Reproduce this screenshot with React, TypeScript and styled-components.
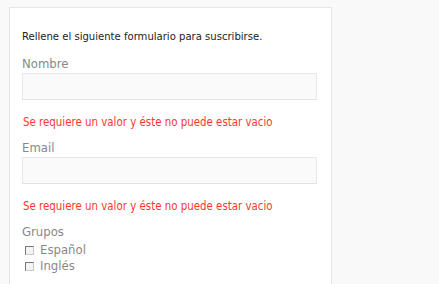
import React from 'react';
import styled, { createGlobalStyle } from 'styled-components';

const GlobalStyle = createGlobalStyle`
  html, body {
    margin: 0;
    padding: 0;
    background: #f9f9f9;
  }
  body {
    font-family: 'DejaVu Sans Condensed', 'DejaVu Sans', sans-serif;
    font-stretch: condensed;
  }
`;

const Card = styled.div`
  margin: 7px 0 0 9px;
  width: 297px;
  min-height: 270px;
  padding: 21px 12px 0 12px;
  background: #fff;
  border: 1px solid #e6e6e6;
`;

const Intro = styled.p`
  margin: 0 0 11px 0;
  font-size: 11.2px;
  line-height: 16px;
  color: #222;
`;

const Field = styled.div`
  display: flex;
  flex-direction: column;
`;

const Label = styled.label`
  font-size: 13px;
  line-height: 16px;
  color: #888;
  margin-bottom: 1px;
`;

const Input = styled.input`
  box-sizing: border-box;
  width: 295px;
  height: 27px;
  margin: 0;
  border: 1px solid #e8e8e8;
  border-bottom-color: #e2e2e2;
  background: #fafafa;
  outline: none;
`;

const ErrorText = styled.div`
  margin: 14px 0 10px 1px;
  font-size: 11.4px;
  line-height: 16px;
  color: #ff3535;
`;

const Options = styled.div`
  display: flex;
  flex-direction: column;
  padding: 1px 0 0 3px;
`;

const Option = styled.label`
  display: flex;
  align-items: center;
  gap: 6px;
  font-size: 13px;
  line-height: 16px;
  color: #888;
`;

const Box = styled.span`
  box-sizing: border-box;
  width: 9px;
  height: 9px;
  background: #f4f4f4;
  border: 1px solid #777;
  border-right-color: #c8c8c8;
  border-bottom-color: #c8c8c8;
`;

export default function App() {
  return (
    <>
      <GlobalStyle />
      <Card>
        <Intro>Rellene el siguiente formulario para suscribirse.</Intro>
        <Field>
          <Label>Nombre</Label>
          <Input />
          <ErrorText>Se requiere un valor y éste no puede estar vacio</ErrorText>
        </Field>
        <Field>
          <Label>Email</Label>
          <Input />
          <ErrorText>Se requiere un valor y éste no puede estar vacio</ErrorText>
        </Field>
        <Field>
          <Label>Grupos</Label>
          <Options>
            <Option>
              <Box />
              Español
            </Option>
            <Option>
              <Box />
              Inglés
            </Option>
          </Options>
        </Field>
      </Card>
    </>
  );
}
